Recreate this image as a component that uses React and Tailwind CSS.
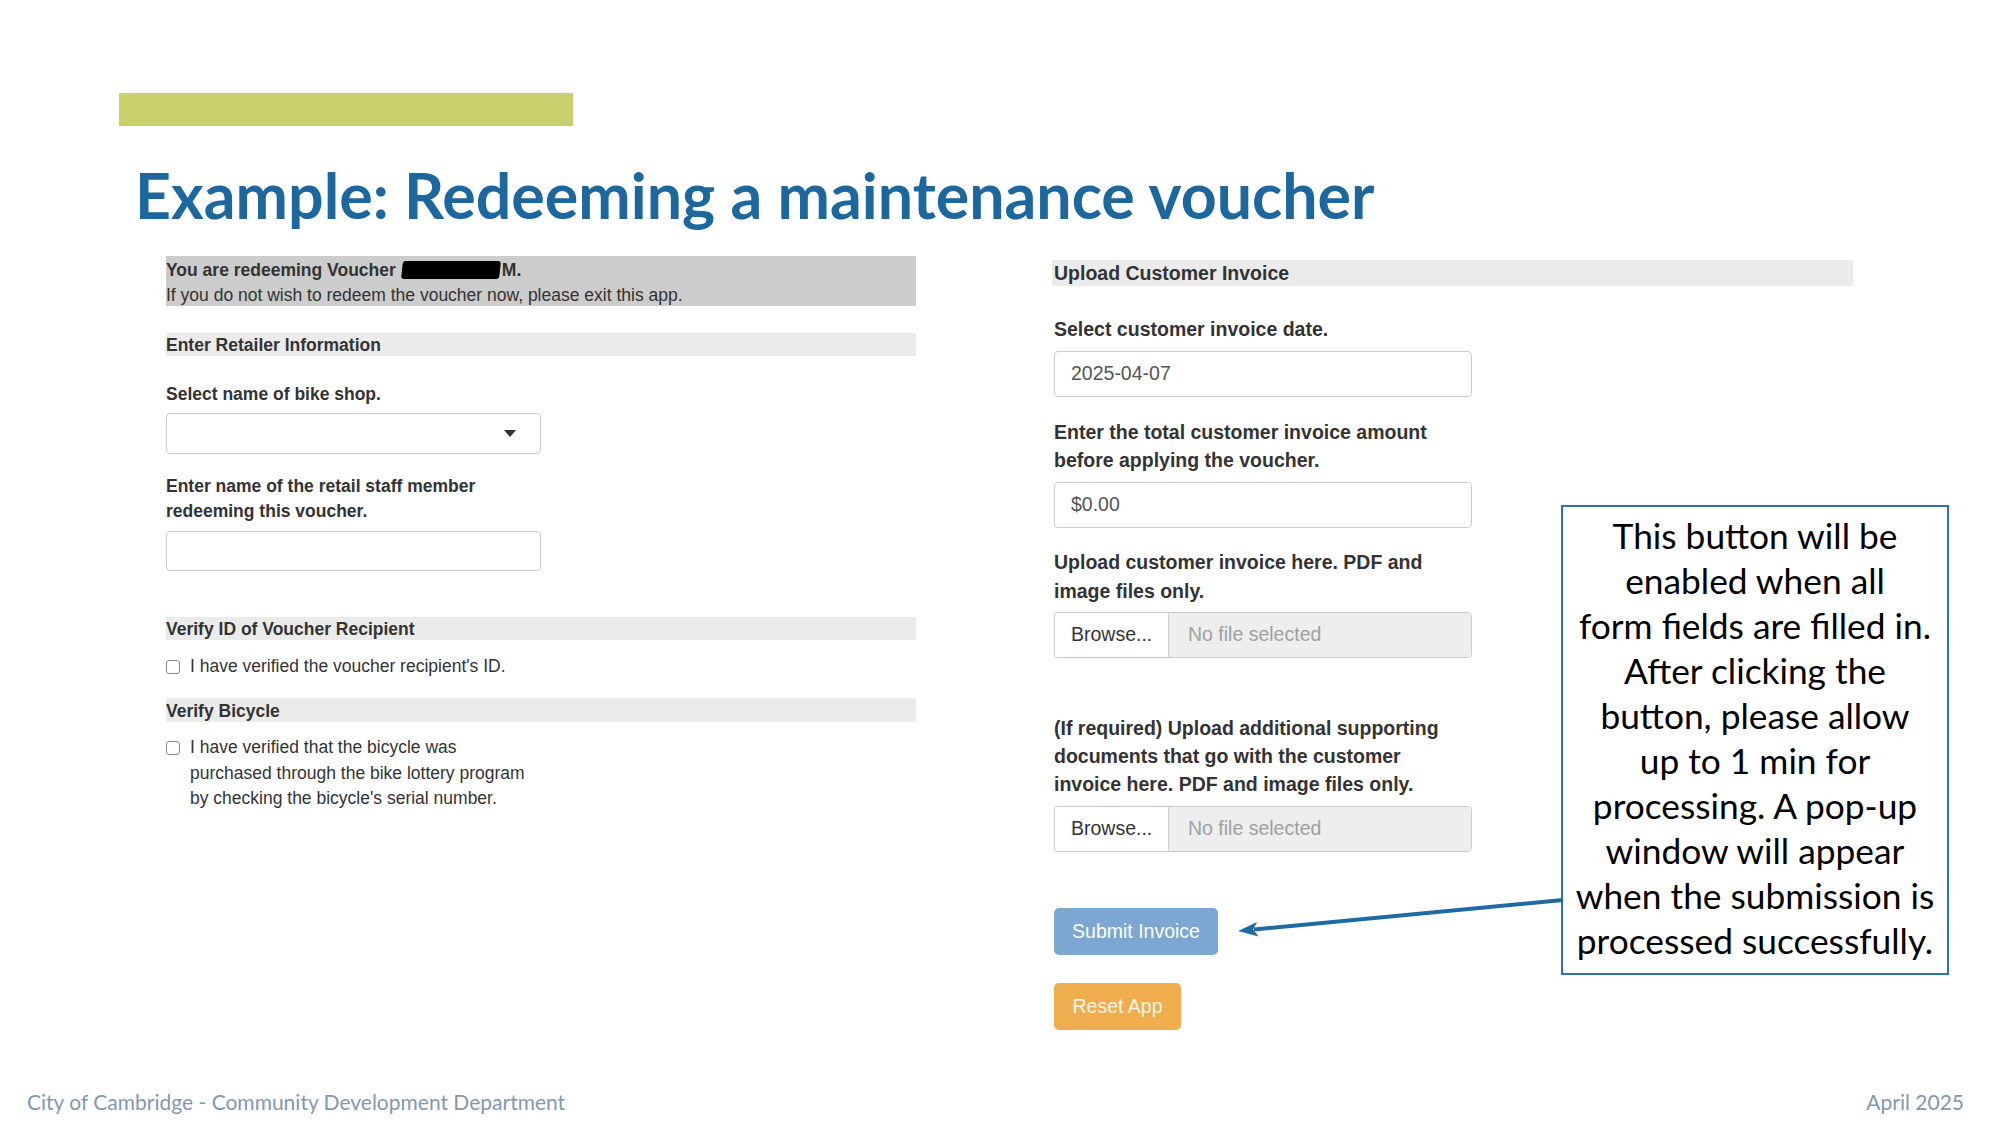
import React from "react";

const FORM_FONT = { fontFamily: '"Liberation Sans", Arial, sans-serif' };
const SLIDE_FONT = { fontFamily: 'Lato, "Open Sans", sans-serif' };

function Checkbox() {
  return (
    <span className="mt-[6px] inline-block h-[14px] w-[14px] shrink-0 rounded-[3px] border border-[#8a8a8a] bg-white" />
  );
}

function FileInput() {
  return (
    <div className="flex h-[46px] w-[418px] overflow-hidden rounded-[4px] border border-[#cccccc] text-[19.5px]">
      <div className="flex w-[114px] items-center border-r border-[#cccccc] bg-white pl-[16px] text-[#333333]">
        Browse...
      </div>
      <div className="flex flex-1 items-center bg-[#eeeeee] pl-[19px] text-[#a0a0a0]">No file selected</div>
    </div>
  );
}

function LeftBar({ children, className = "" }) {
  return (
    <div className={`h-[23px] w-[750px] bg-[#ebebeb] pt-[1px] text-[17.5px] font-bold leading-[23px] text-[#333333] ${className}`}>
      {children}
    </div>
  );
}

export default function App() {
  return (
    <div className="relative flex h-[1125px] w-[2000px] flex-col overflow-hidden bg-white">
      {/* accent bar + title */}
      <div className="ml-[119px] mt-[93px] h-[33px] w-[454px] bg-[#c9d06b]" />
      <h1
        className="ml-[135px] mt-[30px] h-[78px] whitespace-nowrap text-[62.7px] font-bold leading-[78px] text-[#1b679e]"
        style={SLIDE_FONT}
      >
        Example: Redeeming a maintenance voucher
      </h1>

      <div className="mt-[22px] flex" style={FORM_FONT}>
        {/* left form */}
        <div className="ml-[166px] w-[750px]">
          <div className="h-[50px] bg-[#cccccc] pt-[1px] text-[17.5px] leading-[26px] text-[#333333]">
            <div className="flex items-center font-bold">
              You are redeeming Voucher
              <span className="ml-[6px] mr-[2px] inline-block h-[18px] w-[98px] -skew-x-6 rounded-[3px] bg-black" />
              M.
            </div>
            <div className="-mt-[1px]">If you do not wish to redeem the voucher now, please exit this app.</div>
          </div>

          <LeftBar className="mt-[27px]">Enter Retailer Information</LeftBar>

          <div className="mt-[26px] text-[17.5px] font-bold leading-[25px] text-[#333333]">
            Select name of bike shop.
          </div>
          <div className="mt-[6px] flex h-[41px] w-[375px] items-center justify-end rounded-[4px] border border-[#cccccc] pr-[24px]">
            <svg width="12" height="7" viewBox="0 0 12 7">
              <polygon points="0,0 12,0 6,7" fill="#333333" />
            </svg>
          </div>

          <div className="mt-[20px] text-[17.5px] font-bold leading-[25px] text-[#333333]">
            Enter name of the retail staff member
            <br />
            redeeming this voucher.
          </div>
          <div className="mt-[7px] h-[40px] w-[375px] rounded-[4px] border border-[#cccccc]" />

          <LeftBar className="mt-[46px]">Verify ID of Voucher Recipient</LeftBar>
          <div className="mt-[14px] flex gap-[10px] text-[17.5px] leading-[25px] text-[#333333]">
            <Checkbox />
            <span>I have verified the voucher recipient's ID.</span>
          </div>

          <LeftBar className="mt-[19px] h-[24px] leading-[24px]">Verify Bicycle</LeftBar>
          <div className="mt-[13px] flex gap-[10px] text-[17.5px] leading-[25.5px] text-[#333333]">
            <Checkbox />
            <span>
              I have verified that the bicycle was
              <br />
              purchased through the bike lottery program
              <br />
              by checking the bicycle's serial number.
            </span>
          </div>
        </div>

        {/* right form */}
        <div className="ml-[136px] mt-[4px] w-[801px] text-[19.5px] text-[#333333]">
          <div className="h-[26px] bg-[#ebebeb] pl-[2px] font-bold leading-[26px]">Upload Customer Invoice</div>

          <div className="ml-[2px] mt-[29px] font-bold leading-[28px]">Select customer invoice date.</div>
          <div className="ml-[2px] mt-[8px] flex h-[46px] w-[418px] items-center rounded-[4px] border border-[#cccccc] pl-[16px] text-[#555555]">
            2025-04-07
          </div>

          <div className="ml-[2px] mt-[21px] font-bold leading-[28px]">
            Enter the total customer invoice amount
            <br />
            before applying the voucher.
          </div>
          <div className="ml-[2px] mt-[8px] flex h-[46px] w-[418px] items-center rounded-[4px] border border-[#cccccc] pl-[16px] text-[#555555]">
            $0.00
          </div>

          <div className="ml-[2px] mt-[20px] font-bold leading-[28.5px]">
            Upload customer invoice here. PDF and
            <br />
            image files only.
          </div>
          <div className="ml-[2px] mt-[7px]">
            <FileInput />
          </div>

          <div className="ml-[2px] mt-[56px] font-bold leading-[28px]">
            (If required) Upload additional supporting
            <br />
            documents that go with the customer
            <br />
            invoice here. PDF and image files only.
          </div>
          <div className="ml-[2px] mt-[8px]">
            <FileInput />
          </div>

          <div className="ml-[2px] mt-[56px] flex h-[47px] w-[164px] items-center justify-center rounded-[5px] bg-[#7ba7d2] text-white">
            Submit Invoice
          </div>
          <div className="ml-[2px] mt-[28px] flex h-[47px] w-[127px] items-center justify-center rounded-[5px] bg-[#efad4e] text-[#fdf6ea]">
            Reset App
          </div>
        </div>
      </div>

      {/* footer */}
      <div className="mt-auto flex items-center justify-between pb-[11px] pl-[27px] pr-[36px] text-[21px] leading-[24px] text-[#8497b0]" style={SLIDE_FONT}>
        <span>City of Cambridge - Community Development Department</span>
        <span>April 2025</span>
      </div>

      {/* callout annotation */}
      <div
        className="absolute left-[1561px] top-[505px] flex h-[470px] w-[388px] flex-col items-center border-2 border-[#2e74b5] pt-[6px] text-center text-[35.3px] leading-[45px] whitespace-nowrap text-black"
        style={SLIDE_FONT}
      >
        <span>This button will be</span>
        <span>enabled when all</span>
        <span>form fields are filled in.</span>
        <span>After clicking the</span>
        <span>button, please allow</span>
        <span>up to 1 min for</span>
        <span>processing. A pop-up</span>
        <span>window will appear</span>
        <span>when the submission is</span>
        <span>processed successfully.</span>
      </div>
      <svg className="absolute left-[1230px] top-[890px]" width="335" height="55" viewBox="0 0 335 55">
        <line x1="333" y1="10" x2="24" y2="39.5" stroke="#1f6aa5" strokeWidth="4" />
        <polygon points="8,41 28.6,46.5 23,39.6 27.2,32" fill="#1f6aa5" />
      </svg>
    </div>
  );
}
